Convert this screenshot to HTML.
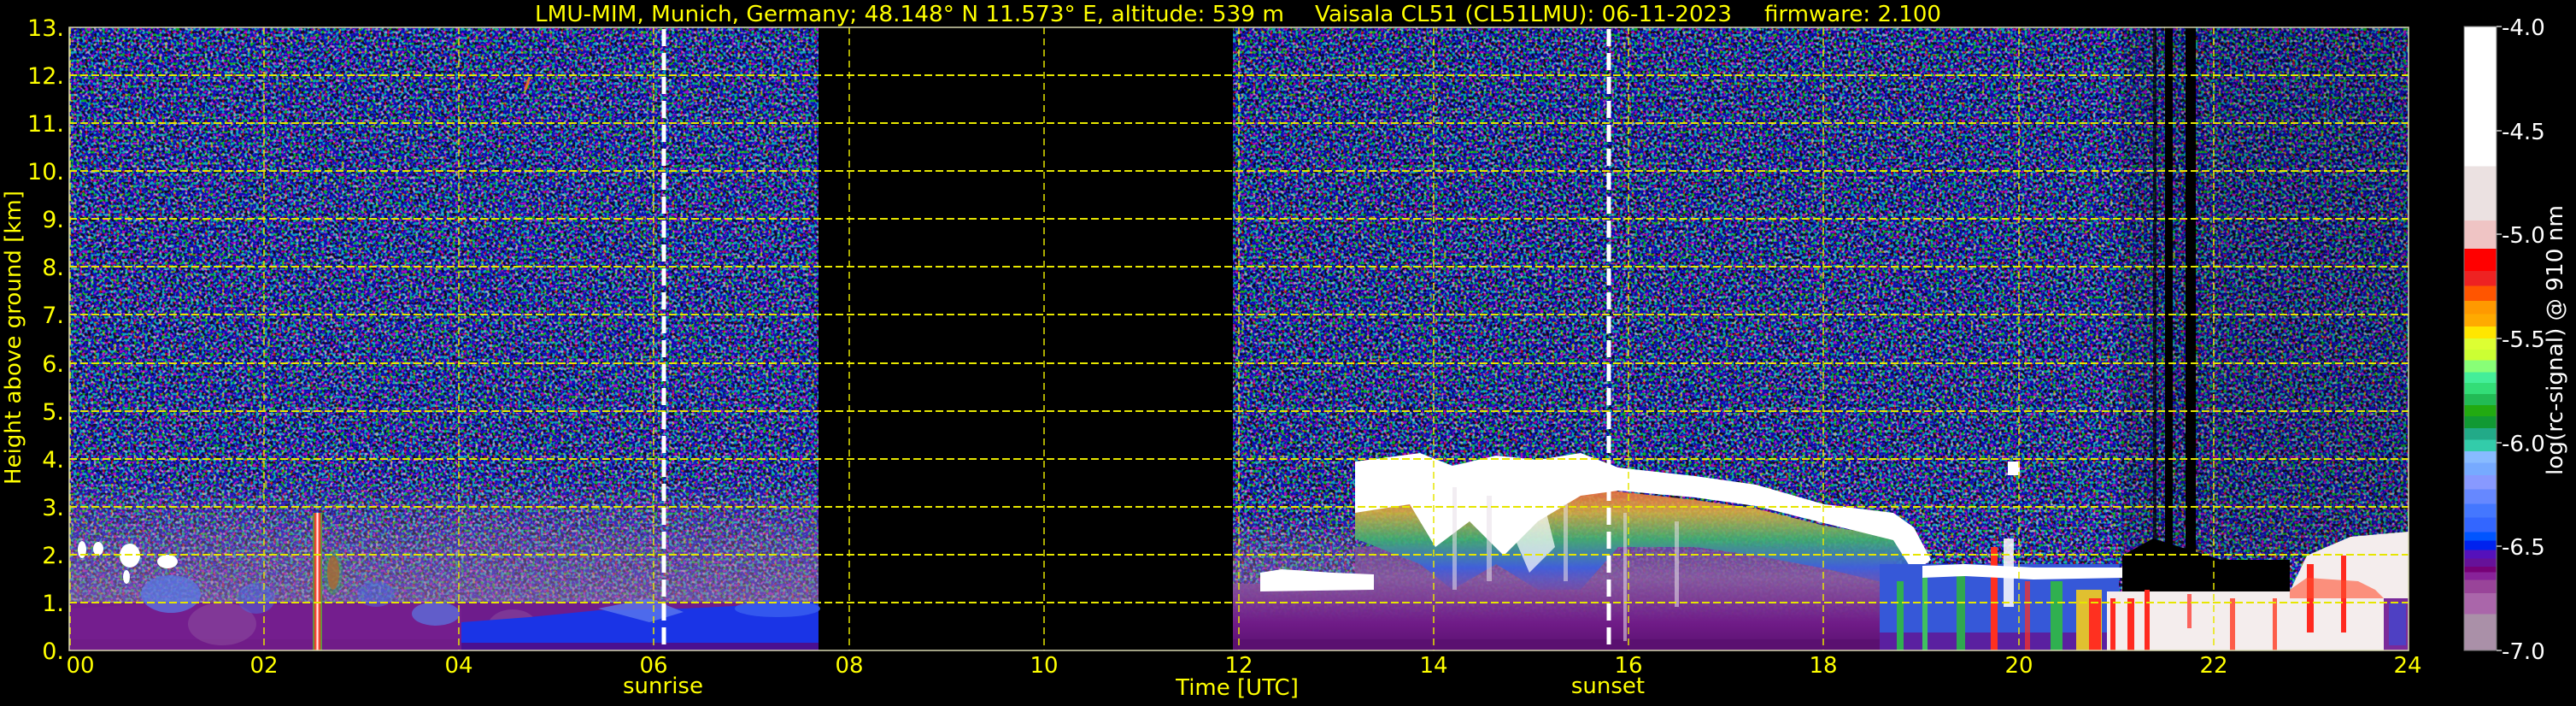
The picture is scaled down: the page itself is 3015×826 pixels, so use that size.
<!DOCTYPE html>
<html><head><meta charset="utf-8"><style>
html,body{margin:0;padding:0;background:#000;}
svg{display:block;}
text{font-family:"DejaVu Sans","Liberation Sans",sans-serif;}
</style></head><body>
<svg width="3015" height="826" viewBox="0 0 3015 826" xmlns="http://www.w3.org/2000/svg">
<defs>
<filter id="nz" x="0" y="0" width="100%" height="100%" filterUnits="objectBoundingBox">
<feTurbulence type="fractalNoise" baseFrequency="0.3" numOctaves="1" seed="4"/>
<feColorMatrix type="matrix" values="9 0 0 0 -4.9  0 9 0 0 -4.6  0 0 9 0 -3.7  0 0 0 0 1"/>
</filter>
<linearGradient id="gl" x1="0" y1="32" x2="0" y2="761" gradientUnits="userSpaceOnUse">
<stop offset="0" stop-color="#22225a"/><stop offset="0.66" stop-color="#26245a"/>
<stop offset="0.8" stop-color="#3a2a66"/><stop offset="1" stop-color="#5a3a70"/>
</linearGradient>
<linearGradient id="gr" x1="0" y1="32" x2="0" y2="761" gradientUnits="userSpaceOnUse">
<stop offset="0" stop-color="#1c1c48"/><stop offset="0.7" stop-color="#22204c"/>
<stop offset="1" stop-color="#4a3a66"/>
</linearGradient>
<linearGradient id="haze" x1="0" y1="0" x2="0" y2="1">
<stop offset="0" stop-color="#a080b0" stop-opacity="0"/><stop offset="0.5" stop-color="#9a78aa" stop-opacity="0.35"/><stop offset="1" stop-color="#9a70a8" stop-opacity="0.6"/>
</linearGradient>
<linearGradient id="pur" x1="0" y1="0" x2="0" y2="1">
<stop offset="0" stop-color="#7a4a98" stop-opacity="0.6"/><stop offset="0.35" stop-color="#8a5aa0" stop-opacity="0.85"/><stop offset="0.75" stop-color="#701c88"/><stop offset="1" stop-color="#5a1070"/>
</linearGradient>
<linearGradient id="fr" x1="0" y1="0" x2="0" y2="1">
<stop offset="0" stop-color="#ff4a3a"/><stop offset="0.3" stop-color="#d8b040"/><stop offset="0.55" stop-color="#40b070"/><stop offset="0.8" stop-color="#3a60e0"/><stop offset="1" stop-color="#5a50c0" stop-opacity="0.4"/>
</linearGradient>
<linearGradient id="spk" x1="0" y1="0" x2="1" y2="0">
<stop offset="0" stop-color="#30b050"/><stop offset="0.3" stop-color="#ff3020"/><stop offset="0.5" stop-color="#ffffff"/><stop offset="0.7" stop-color="#ff3020"/><stop offset="1" stop-color="#30b050"/>
</linearGradient>
<linearGradient id="cb" x1="0" y1="0" x2="0" y2="1">
<stop offset="0" stop-color="#ffffff"/><stop offset="0.224" stop-color="#ffffff"/>
<stop offset="0.224" stop-color="#ebe1e1"/><stop offset="0.311" stop-color="#ebe1e1"/>
<stop offset="0.311" stop-color="#efc4c4"/><stop offset="0.356" stop-color="#efc4c4"/>
<stop offset="0.356" stop-color="#ff0000"/><stop offset="0.392" stop-color="#ff0000"/>
<stop offset="0.392" stop-color="#ee2222"/><stop offset="0.416" stop-color="#ee2222"/>
<stop offset="0.416" stop-color="#ff5500"/><stop offset="0.44" stop-color="#ff5500"/>
<stop offset="0.44" stop-color="#ff9900"/><stop offset="0.461" stop-color="#ff9900"/>
<stop offset="0.461" stop-color="#ffaa00"/><stop offset="0.481" stop-color="#ffaa00"/>
<stop offset="0.481" stop-color="#ffe600"/><stop offset="0.5" stop-color="#ffe600"/>
<stop offset="0.5" stop-color="#ddff33"/><stop offset="0.518" stop-color="#ddff33"/>
<stop offset="0.518" stop-color="#ccff33"/><stop offset="0.535" stop-color="#ccff33"/>
<stop offset="0.535" stop-color="#88ff77"/><stop offset="0.554" stop-color="#88ff77"/>
<stop offset="0.554" stop-color="#44ee99"/><stop offset="0.571" stop-color="#44ee99"/>
<stop offset="0.571" stop-color="#33dd77"/><stop offset="0.589" stop-color="#33dd77"/>
<stop offset="0.589" stop-color="#22bb55"/><stop offset="0.607" stop-color="#22bb55"/>
<stop offset="0.607" stop-color="#22aa11"/><stop offset="0.625" stop-color="#22aa11"/>
<stop offset="0.625" stop-color="#119933"/><stop offset="0.644" stop-color="#119933"/>
<stop offset="0.644" stop-color="#22aa88"/><stop offset="0.662" stop-color="#22aa88"/>
<stop offset="0.662" stop-color="#33ccaa"/><stop offset="0.681" stop-color="#33ccaa"/>
<stop offset="0.681" stop-color="#88bbff"/><stop offset="0.699" stop-color="#88bbff"/>
<stop offset="0.699" stop-color="#77aaff"/><stop offset="0.719" stop-color="#77aaff"/>
<stop offset="0.719" stop-color="#8899ff"/><stop offset="0.742" stop-color="#8899ff"/>
<stop offset="0.742" stop-color="#6688ff"/><stop offset="0.765" stop-color="#6688ff"/>
<stop offset="0.765" stop-color="#4477ff"/><stop offset="0.787" stop-color="#4477ff"/>
<stop offset="0.787" stop-color="#3366ff"/><stop offset="0.81" stop-color="#3366ff"/>
<stop offset="0.81" stop-color="#0055ff"/><stop offset="0.824" stop-color="#0055ff"/>
<stop offset="0.824" stop-color="#0022ee"/><stop offset="0.839" stop-color="#0022ee"/>
<stop offset="0.839" stop-color="#5511bb"/><stop offset="0.853" stop-color="#5511bb"/>
<stop offset="0.853" stop-color="#661199"/><stop offset="0.866" stop-color="#661199"/>
<stop offset="0.866" stop-color="#770077"/><stop offset="0.875" stop-color="#770077"/>
<stop offset="0.875" stop-color="#882299"/><stop offset="0.887" stop-color="#882299"/>
<stop offset="0.887" stop-color="#994499"/><stop offset="0.908" stop-color="#994499"/>
<stop offset="0.908" stop-color="#aa66aa"/><stop offset="0.942" stop-color="#aa66aa"/>
<stop offset="0.942" stop-color="#aa90a8"/><stop offset="1" stop-color="#aa90a8"/>
</linearGradient>
</defs>

<rect width="3015" height="826" fill="#000"/>

<rect x="81" y="32" width="877" height="729" fill="url(#gl)"/>
<rect x="81" y="32" width="877" height="729" filter="url(#nz)" opacity="0.6"/>
<rect x="81" y="560" width="877" height="145" fill="url(#haze)"/>
<rect x="1443" y="32" width="1376" height="729" fill="url(#gr)"/>
<rect x="1443" y="32" width="1376" height="729" filter="url(#nz)" opacity="0.6"/>
<rect x="1443" y="600" width="780" height="105" fill="url(#haze)"/>

<rect x="81" y="705" width="877" height="56" fill="#6e1c8c"/>
<rect x="81" y="748" width="877" height="13" fill="#5a1070"/>
<polygon points="81,712 200,705 330,708 500,706 540,712 540,761 81,761" fill="#751f8e" opacity="0.8"/>
<ellipse cx="260" cy="730" rx="40" ry="25" fill="#9a6aa8" opacity="0.35"/>
<ellipse cx="600" cy="735" rx="30" ry="22" fill="#9a6aa8" opacity="0.35"/>
<polygon points="540,728 620,722 700,714 800,712 880,708 958,704 958,761 540,761" fill="#1a34e6"/>
<rect x="540" y="752" width="418" height="9" fill="#4a1090"/>
<polygon points="700,712 760,700 800,716 760,728" fill="#5a78ee" opacity="0.8"/>
<ellipse cx="910" cy="712" rx="50" ry="10" fill="#3a60f0" opacity="0.8"/>
<ellipse cx="200" cy="695" rx="35" ry="22" fill="#5a78e4" opacity="0.75"/>
<ellipse cx="510" cy="718" rx="28" ry="14" fill="#5a78e4" opacity="0.7"/>
<ellipse cx="300" cy="700" rx="22" ry="18" fill="#4a6ae0" opacity="0.5"/>
<ellipse cx="440" cy="695" rx="22" ry="15" fill="#4a6ae0" opacity="0.5"/>
<rect x="366" y="600" width="11" height="161" fill="url(#spk)"/>
<ellipse cx="390" cy="670" rx="7" ry="20" fill="#ff3a20" opacity="0.8"/>
<ellipse cx="390" cy="670" rx="11" ry="26" fill="#30b050" opacity="0.4"/>
<ellipse cx="115" cy="642" rx="6" ry="8" fill="#fff"/>
<ellipse cx="152" cy="650" rx="12" ry="14" fill="#fff"/>
<ellipse cx="196" cy="657" rx="12" ry="8" fill="#fff"/>
<ellipse cx="96" cy="643" rx="5" ry="10" fill="#fff"/>
<ellipse cx="148" cy="675" rx="4" ry="8" fill="#fff"/>
<line x1="620" y1="90" x2="615" y2="105" stroke="#e07030" stroke-width="3"/>

<polygon points="1443,683 1586,683 1586,640 1900,630 2216,650 2216,761 1443,761" fill="url(#pur)"/>
<rect x="1443" y="748" width="773" height="13" fill="#5a1070"/>
<polygon points="1475,670 1500,666 1560,670 1608,672 1608,690 1475,692" fill="#fff"/>
<polygon points="1586,575 1662,560 1751,562 1850,560 1894,575 1984,585 2055,595 2135,615 2216,628 2240,650 2240,690 2135,665 2055,650 1984,640 1894,640 1850,690 1800,690 1751,660 1700,690 1662,660 1586,630" fill="url(#fr)" opacity="0.9"/>
<polygon points="1586,540 1662,530 1700,545 1751,533 1800,538 1850,530 1894,547 1984,557 2055,567 2135,590 2216,600 2240,617 2260,655 2240,670 2216,632 2135,612 2055,592 1984,582 1894,574 1850,580 1800,610 1760,650 1720,610 1680,640 1650,590 1586,600" fill="#ffffff"/>
<polygon points="1760,600 1800,560 1820,640 1790,670" fill="#ffffff" opacity="0.7"/>
<g fill="#e8e0e8" opacity="0.55">
<rect x="1700" y="570" width="5" height="120"/><rect x="1740" y="580" width="6" height="100"/><rect x="1830" y="590" width="5" height="90"/><rect x="1900" y="600" width="4" height="150"/><rect x="1960" y="610" width="5" height="100"/>
</g>
<rect x="2200" y="660" width="280" height="101" fill="#3658d8"/>
<rect x="2200" y="740" width="280" height="21" fill="#5a20a0"/>
<rect x="2220" y="680" width="8" height="81" fill="#30b050"/>
<rect x="2250" y="670" width="6" height="91" fill="#40c060"/>
<rect x="2290" y="670" width="10" height="91" fill="#30a850"/>
<rect x="2330" y="640" width="8" height="121" fill="#ff3020"/>
<rect x="2345" y="630" width="12" height="80" fill="#ffffff" opacity="0.85"/>
<rect x="2370" y="680" width="6" height="81" fill="#ff3020" opacity="0.7"/>
<rect x="2400" y="680" width="14" height="81" fill="#30b050"/>
<rect x="2430" y="690" width="30" height="71" fill="#e0c030"/>
<rect x="2445" y="700" width="14" height="61" fill="#ff3020"/>
<polygon points="2250,662 2300,660 2380,664 2484,664 2484,676 2380,678 2300,674 2250,676" fill="#ffffff"/>
<rect x="2350" y="540" width="14" height="16" fill="#fff"/>
<rect x="2484" y="32" width="335" height="620" fill="#000" opacity="0.15"/>
<rect x="2534" y="32" width="9" height="650" fill="#000"/>
<rect x="2558" y="32" width="12" height="650" fill="#000"/>
<rect x="2520" y="32" width="4" height="650" fill="#000" opacity="0.7"/>
<polygon points="2484,650 2520,630 2600,655 2680,655 2680,692 2484,692" fill="#000"/>
<polygon points="2466,692 2680,692 2700,650 2751,628 2819,622 2819,761 2466,761" fill="#f4eded"/>
<rect x="2470" y="700" width="6" height="61" fill="#ff2a20"/>
<rect x="2490" y="700" width="8" height="61" fill="#ff2a20"/>
<rect x="2510" y="690" width="6" height="71" fill="#ff2a20"/>
<rect x="2560" y="695" width="5" height="40" fill="#ff2a20" opacity="0.7"/>
<rect x="2610" y="700" width="6" height="61" fill="#ff3a20" opacity="0.8"/>
<rect x="2660" y="700" width="5" height="61" fill="#ff3a20" opacity="0.8"/>
<rect x="2700" y="660" width="8" height="80" fill="#ff2a20"/>
<rect x="2740" y="650" width="6" height="90" fill="#ff2a20"/>
<polygon points="2680,690 2700,676 2760,680 2780,690 2790,700 2680,700" fill="#ff5030" opacity="0.6"/>
<rect x="2790" y="700" width="29" height="61" fill="#7a2a9a"/>
<rect x="2796" y="705" width="20" height="50" fill="#3050e0" opacity="0.6"/>

<g stroke="#e6e600" stroke-width="2" stroke-dasharray="9 4" fill="none">
<line x1="81" y1="705" x2="2819" y2="705"/><line x1="81" y1="649" x2="2819" y2="649"/>
<line x1="81" y1="593" x2="2819" y2="593"/><line x1="81" y1="537" x2="2819" y2="537"/>
<line x1="81" y1="481" x2="2819" y2="481"/><line x1="81" y1="425" x2="2819" y2="425"/>
<line x1="81" y1="368" x2="2819" y2="368"/><line x1="81" y1="312" x2="2819" y2="312"/>
<line x1="81" y1="256" x2="2819" y2="256"/><line x1="81" y1="200" x2="2819" y2="200"/>
<line x1="81" y1="144" x2="2819" y2="144"/><line x1="81" y1="88" x2="2819" y2="88"/>
</g>
<g stroke="#e6e600" stroke-width="1.5" stroke-dasharray="8 5" fill="none">
<line x1="82" y1="32" x2="82" y2="761"/>
<line x1="309" y1="32" x2="309" y2="761"/><line x1="537" y1="32" x2="537" y2="761"/>
<line x1="765" y1="32" x2="765" y2="761"/><line x1="994" y1="32" x2="994" y2="761"/>
<line x1="1222" y1="32" x2="1222" y2="761"/><line x1="1450" y1="32" x2="1450" y2="761"/>
<line x1="1678" y1="32" x2="1678" y2="761"/><line x1="1906" y1="32" x2="1906" y2="761"/>
<line x1="2134" y1="32" x2="2134" y2="761"/><line x1="2363" y1="32" x2="2363" y2="761"/>
<line x1="2591" y1="32" x2="2591" y2="761"/>
</g>
<rect x="81" y="32" width="2738" height="729" fill="none" stroke="#d8d8b0" stroke-width="1.5"/>
<line x1="777" y1="34" x2="777" y2="761" stroke="#fff" stroke-width="5" stroke-dasharray="20 8"/>
<line x1="1883" y1="34" x2="1883" y2="761" stroke="#fff" stroke-width="5" stroke-dasharray="20 8"/>

<g fill="#ffff00" font-size="26">
<text x="626" y="25" textLength="877" lengthAdjust="spacingAndGlyphs">LMU-MIM, Munich, Germany; 48.148° N 11.573° E, altitude: 539 m</text>
<text x="1539" y="25" textLength="488" lengthAdjust="spacingAndGlyphs">Vaisala CL51 (CL51LMU): 06-11-2023</text>
<text x="2065" y="25" textLength="207" lengthAdjust="spacingAndGlyphs">firmware: 2.100</text>
</g>

<g fill="#ffff00" font-size="27" text-anchor="end">
<text x="75" y="42">13.</text><text x="75" y="98">12.</text><text x="75" y="154">11.</text>
<text x="75" y="210">10.</text><text x="75" y="266">9.</text><text x="75" y="322">8.</text>
<text x="75" y="378">7.</text><text x="75" y="435">6.</text><text x="75" y="491">5.</text>
<text x="75" y="547">4.</text><text x="75" y="603">3.</text><text x="75" y="659">2.</text>
<text x="75" y="715">1.</text><text x="75" y="771">0.</text>
</g>
<text transform="translate(24,395) rotate(-90)" fill="#ffff00" font-size="26" text-anchor="middle" textLength="344" lengthAdjust="spacingAndGlyphs">Height above ground [km]</text>

<g fill="#ffff00" font-size="26" text-anchor="middle">
<text x="94" y="787">00</text><text x="309" y="787">02</text><text x="537" y="787">04</text>
<text x="765" y="787">06</text><text x="994" y="787">08</text><text x="1222" y="787">10</text>
<text x="1450" y="787">12</text><text x="1678" y="787">14</text><text x="1906" y="787">16</text>
<text x="2134" y="787">18</text><text x="2363" y="787">20</text><text x="2591" y="787">22</text>
<text x="2818" y="787">24</text>
<text x="776" y="811">sunrise</text>
<text x="1448" y="813">Time [UTC]</text>
<text x="1882" y="811">sunset</text>
</g>

<rect x="2884" y="31" width="38" height="730" fill="url(#cb)"/>
<rect x="2884" y="31" width="38" height="730" fill="none" stroke="#777" stroke-width="1"/>
<g stroke="#ccc" stroke-width="1.5">
<line x1="2922" y1="31" x2="2928" y2="31"/><line x1="2922" y1="153" x2="2928" y2="153"/>
<line x1="2922" y1="274" x2="2928" y2="274"/><line x1="2922" y1="396" x2="2928" y2="396"/>
<line x1="2922" y1="518" x2="2928" y2="518"/><line x1="2922" y1="639" x2="2928" y2="639"/>
<line x1="2922" y1="761" x2="2928" y2="761"/>
</g>
<g fill="#fff" font-size="26">
<text x="2928" y="41">-4.0</text><text x="2928" y="163">-4.5</text>
<text x="2928" y="284">-5.0</text><text x="2928" y="406">-5.5</text>
<text x="2928" y="528">-6.0</text><text x="2928" y="649">-6.5</text>
<text x="2928" y="771">-7.0</text>
</g>
<text transform="translate(2999,398) rotate(-90)" fill="#fff" font-size="26" text-anchor="middle" textLength="316" lengthAdjust="spacingAndGlyphs">log(rc-signal) @ 910 nm</text>
</svg>
</body></html>
